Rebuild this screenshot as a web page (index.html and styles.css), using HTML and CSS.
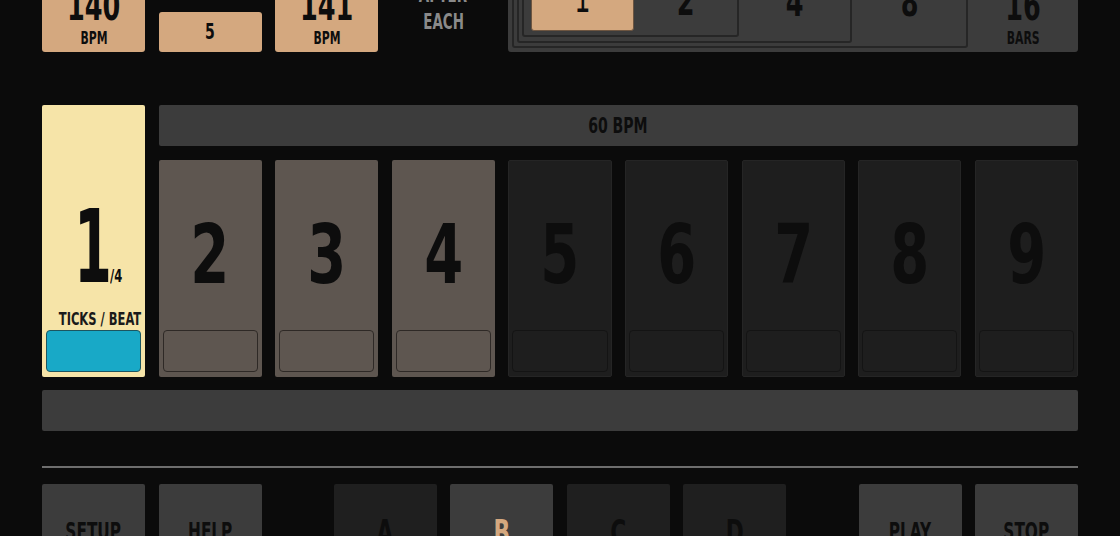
FILE: index.html
```html
<!DOCTYPE html>
<html>
<head>
<meta charset="utf-8">
<title>Metronome</title>
<link rel="stylesheet" href="styles.css">
</head>
<body>
<div class="app">
  <section class="top">
    <div class="tempo tan"><span class="c num">140</span><span class="c unit">BPM</span></div>
    <div class="stepwrap"><div class="step tan"><span class="c">5</span></div></div>
    <div class="tempo tan"><span class="c num">141</span><span class="c unit">BPM</span></div>
    <div class="after"><span class="c">AFTER</span><span class="c">EACH</span></div>
    <div class="bars">
      <div class="nest b8">
        <div class="nest b4">
          <div class="nest b2">
            <div class="one tan"><span class="c bnum thin">1</span></div>
            <div class="blabel"><span class="c bnum">2</span></div>
          </div>
          <div class="blabel"><span class="c bnum">4</span></div>
        </div>
        <div class="blabel"><span class="c bnum">8</span></div>
      </div>
      <div class="blabel end"><span class="c num">16</span><span class="c unit">BARS</span></div>
    </div>
  </section>

  <section class="main">
    <div class="tick">
      <div class="tick-num"><span class="big1"><span class="g">1</span></span><span class="c frac">/4</span></div>
      <div class="tick-label"><span class="c">TICKS / BEAT</span></div>
      <div class="sub cyan"></div>
    </div>
    <div class="bpm"><span class="c">60 BPM</span></div>
    <div class="cell warm"><div class="cnum"><span class="c">2</span></div><div class="sub"></div></div>
    <div class="cell warm"><div class="cnum"><span class="c">3</span></div><div class="sub"></div></div>
    <div class="cell warm"><div class="cnum"><span class="c">4</span></div><div class="sub"></div></div>
    <div class="cell dark"><div class="cnum"><span class="c">5</span></div><div class="sub"></div></div>
    <div class="cell dark"><div class="cnum"><span class="c">6</span></div><div class="sub"></div></div>
    <div class="cell dark"><div class="cnum"><span class="c">7</span></div><div class="sub"></div></div>
    <div class="cell dark"><div class="cnum"><span class="c">8</span></div><div class="sub"></div></div>
    <div class="cell dark"><div class="cnum"><span class="c">9</span></div><div class="sub"></div></div>
  </section>

  <div class="bar"></div>
  <div class="sep"></div>

  <section class="bottom">
    <div class="group">
      <div class="btn"><span class="c">SETUP</span></div>
      <div class="btn"><span class="c">HELP</span></div>
    </div>
    <div class="group">
      <div class="btn letter off"><span class="c">A</span></div>
      <div class="btn letter sel"><span class="c">B</span></div>
      <div class="btn letter off"><span class="c">C</span></div>
      <div class="btn letter off"><span class="c">D</span></div>
    </div>
    <div class="group">
      <div class="btn"><span class="c">PLAY</span></div>
      <div class="btn"><span class="c">STOP</span></div>
    </div>
  </section>
</div>
</body>
</html>
```

FILE: styles.css
```css
html, body {
  margin: 0;
  padding: 0;
  background: #0b0b0b;
  overflow: hidden;
}
body {
  width: 1120px;
  height: 536px;
  font-family: "DejaVu Sans Condensed", "DejaVu Sans", sans-serif;
  font-weight: bold;
  color: #0d0d0d;
}
.app {
  width: 1036px;
  margin-left: 42px;
}
.c {
  display: inline-block;
  white-space: nowrap;
  transform: scaleX(0.71);
}

/* top row */
.top {
  display: grid;
  grid-template-columns: repeat(9, minmax(0, 1fr));
  column-gap: 13.5px;
  height: 100px;
  margin-top: -48px;
}
.tan {
  background: #d4a87f;
  border-radius: 3px;
}
.tempo {
  display: flex;
  flex-direction: column;
  align-items: center;
  justify-content: flex-end;
  padding-bottom: 5px;
}
.num {
  font-size: 40px;
  line-height: 40px;
  margin-bottom: 4px;
}
.unit {
  font-size: 17px;
  line-height: 17px;
}
.stepwrap {
  display: flex;
  align-items: flex-end;
}
.step {
  width: 100%;
  height: 40px;
  line-height: 40px;
  text-align: center;
  font-size: 22px;
}
.after {
  display: flex;
  flex-direction: column;
  align-items: center;
  justify-content: flex-end;
  padding-bottom: 16px;
  color: #8a8a8a;
  font-size: 21px;
  line-height: 27px;
}
.bars {
  grid-column: 5 / 10;
  background: #3c3c3c;
  border-radius: 3px;
  display: flex;
  padding: 4px 0 4px 4px;
}
.nest {
  display: flex;
  border: 2px solid #262626;
  border-radius: 3px;
  background: #3c3c3c;
}
.b8 { width: 449px; padding: 3px 0 3px 3px; }
.b4 { width: 328px; padding: 3px 0 4px 3px; }
.b2 { width: 206px; padding: 3px 0 4px 7px; }
.one {
  width: 103px;
  display: flex;
  align-items: center;
  justify-content: center;
  border: 1px solid #6d5540;
  box-sizing: border-box;
  padding-bottom: 6px;
}
.blabel {
  flex: 1;
  display: flex;
  flex-direction: column;
  align-items: center;
  justify-content: center;
}
.blabel.end {
  justify-content: flex-end;
  padding-bottom: 1px;
}
.bnum {
  font-size: 40px;
  line-height: 40px;
}
.bnum.thin {
  font-weight: normal;
}

/* main grid */
.main {
  display: grid;
  grid-template-columns: repeat(9, minmax(0, 1fr));
  grid-template-rows: 41px 217px;
  gap: 14px 13.5px;
  margin-top: 53px;
}
.tick {
  grid-column: 1;
  grid-row: 1 / 3;
  background: #f6e4a8;
  border-radius: 2px;
  display: flex;
  flex-direction: column;
  padding-top: 92px;
  box-sizing: border-box;
  min-width: 0;
}
.tick-num {
  height: 101px;
  display: flex;
  align-items: baseline;
  justify-content: center;
  padding-left: 9px;
}
.big1 {
  width: 40px;
  display: flex;
  justify-content: center;
  font-size: 101px;
  line-height: 101px;
  transform: scaleX(0.6);
}
.big1 .g {
  white-space: nowrap;
}
.frac {
  width: 14px;
  font-size: 18px;
  line-height: 18px;
  margin-left: -3px;
  transform-origin: left center;
}
.tick-label {
  margin-top: 12px;
  height: 18px;
  font-size: 18px;
  line-height: 18px;
  text-align: center;
  color: #1a1a1a;
  white-space: nowrap;
}
.sub {
  height: 42px;
  margin: 2px 4px 5px;
  border: 1px solid #2e2926;
  border-radius: 4px;
  box-sizing: border-box;
}
.sub.cyan {
  background: #18a9c7;
  border-color: #1c5660;
}
.bpm {
  grid-column: 2 / 10;
  background: #3c3c3c;
  border-radius: 2px;
  text-align: center;
  font-size: 22px;
  line-height: 41px;
}
.cell {
  display: flex;
  flex-direction: column;
  border-radius: 2px;
  box-sizing: border-box;
  padding-top: 54px;
}
.cell.warm {
  background: #5e5650;
}
.cell.dark {
  background: #1e1e1e;
  border: 1px solid #252525;
  padding-top: 53px;
}
.cell.dark .sub {
  border-color: #141414;
  margin: auto 3px 4px;
}
.cnum {
  height: 82px;
  font-size: 82px;
  line-height: 82px;
  text-align: center;
}
.cnum .c {
  transform: scaleX(0.76);
}
.cell .sub {
  margin-top: auto;
}

/* lower bar, separator */
.bar {
  height: 41px;
  margin-top: 13px;
  background: #3c3c3c;
  border-radius: 2px;
}
.sep {
  height: 2px;
  margin-top: 35px;
  background: #6e6e6e;
}

/* bottom buttons */
.bottom {
  display: flex;
  justify-content: space-between;
  margin-top: 16px;
}
.group {
  display: flex;
  gap: 13.5px;
}
.btn {
  width: 103px;
  height: 95px;
  background: #3c3c3c;
  border-radius: 2px;
  display: flex;
  align-items: center;
  justify-content: center;
  font-size: 24px;
}
.btn.letter {
  font-size: 34px;
}
.btn.off {
  background: #1f1f1f;
}
.btn.sel {
  color: #d4a87f;
}
```
